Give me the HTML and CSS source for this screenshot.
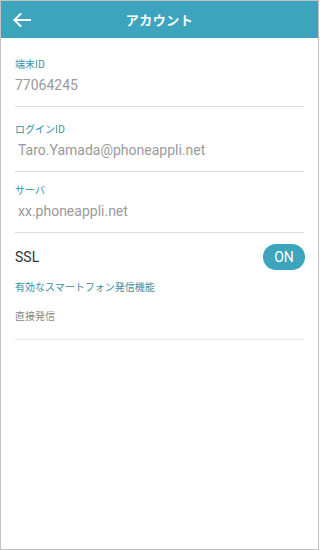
FILE: index.html
```html
<!DOCTYPE html>
<html lang="ja">
<head>
<meta charset="utf-8">
<title>アカウント</title>
<link rel="stylesheet" href="styles.css">
</head>
<body>
<div class="frame">
  <header class="appbar">
    <span class="back" aria-label="戻る">
      <svg width="18" height="14" viewBox="0 0 18 14"><path d="M7.5 1 L1.5 7 L7.5 13 M1.5 7 H17" fill="none" stroke="#fff" stroke-width="2" stroke-linecap="square" stroke-linejoin="miter"/></svg>
    </span>
    <h1 class="title">アカウント</h1>
  </header>
  <main class="content">
    <section class="field field-first">
      <div class="label">端末ID</div>
      <div class="value">77064245</div>
    </section>
    <section class="field field-second">
      <div class="label">ログインID</div>
      <div class="value value-input">Taro.Yamada@phoneappli.net</div>
    </section>
    <section class="field field-third">
      <div class="label">サーバ</div>
      <div class="value value-input">xx.phoneappli.net</div>
    </section>
    <section class="field field-ssl">
      <div class="ssl-row">
        <span class="ssl-label">SSL</span>
        <span class="toggle">ON</span>
      </div>
      <div class="label label-feature">有効なスマートフォン発信機能</div>
      <div class="feature-value">直接発信</div>
    </section>
  </main>
</div>
</body>
</html>
```
FILE: styles.css
```css
* { box-sizing: border-box; }
html, body { margin: 0; padding: 0; background: #fff; }
body { font-family: Roboto, "Noto Sans CJK JP", sans-serif; }
.frame {
  width: 319px;
  height: 550px;
  border: 1px solid #c3c3c3;
  background: #fff;
  overflow: hidden;
}
.appbar {
  height: 37px;
  background: #3ca5bd;
  display: flex;
  align-items: center;
  position: relative;
  padding-left: 12px;
}
.back { display: flex; align-items: center; }
.back svg { display: block; }
.title {
  position: absolute;
  left: 0; right: 0; top: 0;
  margin: 0;
  text-align: center;
  line-height: 37px;
  font-size: 13px;
  font-weight: bold;
  color: #fff;
  font-family: "Noto Sans CJK JP", sans-serif;
  letter-spacing: 0.5px;
  pointer-events: none;
}
.content { padding: 0 14px; }
.field { border-bottom: 1px solid #dcdcdc; }
.field-first { padding: 19px 0 11px; }
.field-second { padding: 15px 0 11px; }
.field-third { padding: 11px 0 11px; }
.field-ssl { padding: 10px 0 16px; border-bottom-color: #e6e6e6; }
.label {
  font-family: "Noto Sans CJK JP", sans-serif;
  font-size: 10px;
  line-height: 14px;
  color: #3a8ea6;
}
.value {
  margin-top: 4px;
  font-size: 14px;
  line-height: 20px;
  color: #9a9a9a;
}
.value-input { padding-left: 3px; }
.ssl-row {
  display: flex;
  align-items: center;
  justify-content: space-between;
  height: 28px;
}
.ssl-label { font-size: 14px; color: #333; }
.toggle {
  width: 42px;
  height: 26px;
  border-radius: 13px;
  background: #3ca5bd;
  color: #fff;
  font-size: 14px;
  display: flex;
  align-items: center;
  justify-content: center;
  margin-right: -1px;
}
.label-feature { margin-top: 9px; }
.feature-value {
  margin-top: 15px;
  font-family: "Noto Sans CJK JP", sans-serif;
  font-size: 10px;
  line-height: 14px;
  color: #8a8a8a;
}
```
